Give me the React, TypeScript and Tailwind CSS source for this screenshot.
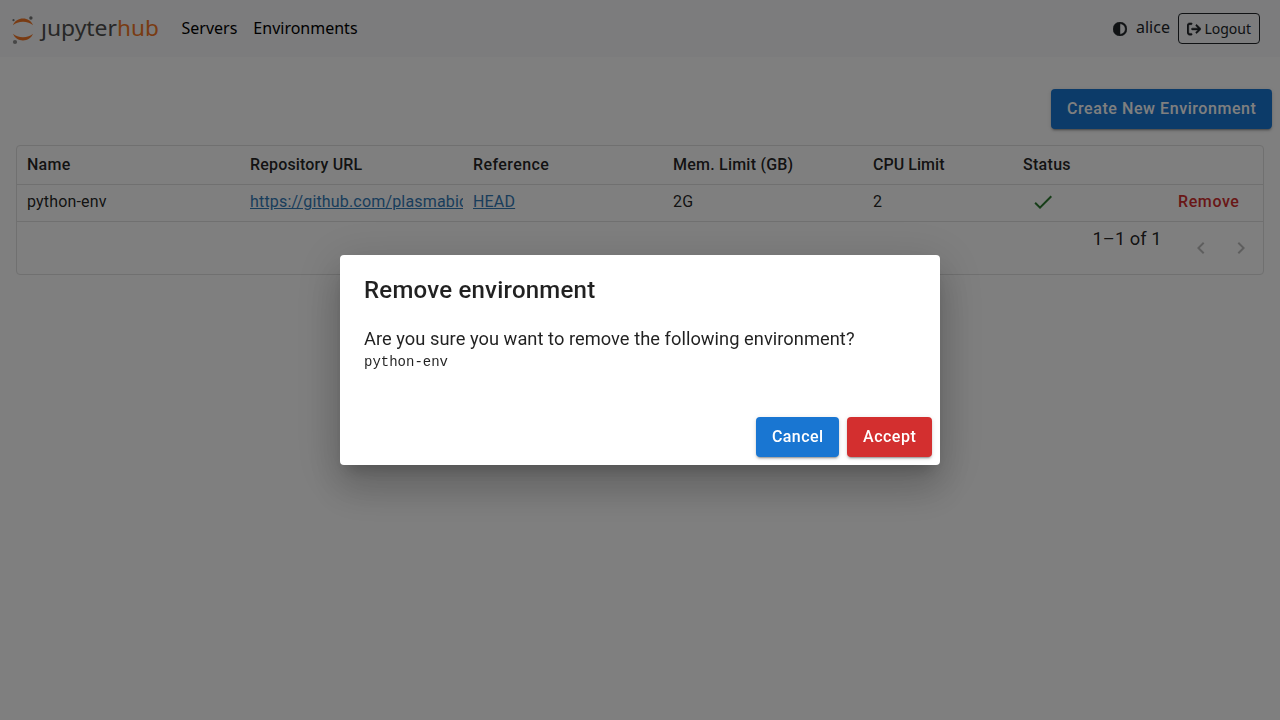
import React from "react";
import { FaArrowRightFromBracket, FaCircleHalfStroke } from "react-icons/fa6";
import { MdCheck, MdKeyboardArrowLeft, MdKeyboardArrowRight } from "react-icons/md";

const buttonShadow =
  "shadow-[0px_3px_1px_-2px_rgba(0,0,0,0.2),0px_2px_2px_0px_rgba(0,0,0,0.14),0px_1px_5px_0px_rgba(0,0,0,0.12)]";
const buttonBase =
  "h-10 rounded-[4px] px-4 py-1.5 text-base leading-7 font-medium text-white";

function Logo() {
  return (
    <svg width="148" height="36" viewBox="0 0 148 36" role="img" aria-label="JupyterHub">
      <path d="M1 14.300C2.800 9.800 6.600 7.600 11 7.600s8.200 2.200 10 6.700C18.600 12 15 10.800 11 10.800S3.400 12 1 14.300z" fill="#f37726" />
      <path d="M1 22.800C2.800 27.300 6.600 29.500 11 29.500s8.200-2.200 10-6.700C18.600 25.100 15 26.300 11 26.300S3.400 25.100 1 22.800z" fill="#f37726" />
      <circle cx="18.900" cy="7" r="1.700" fill="#767677" />
      <circle cx="1.500" cy="9.200" r="1.100" fill="#767677" />
      <circle cx="3" cy="31" r="2.100" fill="#8e8e8e" />
      <text x="29" y="24.800" fontSize="22.300" fill="#4e4e4e" textLength="76" lengthAdjust="spacingAndGlyphs">ȷupyter</text>
      <text x="105" y="24.800" fontSize="22.300" fill="#f37726" textLength="41.800" lengthAdjust="spacingAndGlyphs">hub</text>
    </svg>
  );
}

function Navbar() {
  return (
    <nav className="flex h-[57px] items-center bg-[#f8f9fa] pr-5 pl-3 font-['Noto_Sans',sans-serif] text-base text-black">
      <Logo />
      <div className="ml-[21.500px] flex gap-4 pb-px">
        <a>Servers</a>
        <a>Environments</a>
      </div>
      <div className="ml-auto flex items-center text-[#212529]">
        <FaCircleHalfStroke size={14} className="mt-px" stroke="currentColor" strokeWidth={16} />
        <span className="mr-[8.500px] ml-[8.500px] pb-[3px]">alice</span>
        <a className="flex h-[31px] items-center gap-[3px] rounded-[4px] border border-[#212529] px-2 text-sm">
          <FaArrowRightFromBracket size={14} stroke="currentColor" strokeWidth={18} />
          Logout
        </a>
      </div>
    </nav>
  );
}

const columns = "grid grid-cols-[223px_223px_200px_200px_150px_150px_100px]";
const headers = [
  { label: "Name", tracking: "tracking-[0.25px]" },
  { label: "Repository URL", tracking: "tracking-[0.17px]" },
  { label: "Reference", tracking: "tracking-[0.4px]" },
  { label: "Mem. Limit (GB)", tracking: "tracking-[0.22px]" },
  { label: "CPU Limit", tracking: "tracking-[0.05px]" },
  { label: "Status", tracking: "tracking-[0.3px]" },
];

function EnvironmentTable() {
  return (
    <div className="mx-4 mt-4 h-[130px] overflow-hidden rounded-[4px] border border-[#e0e0e0] text-base tracking-[0.01071em]">
      <div className={`${columns} h-[39px] items-center border-b border-[#e0e0e0] font-medium`}>
        {headers.map((h) => (
          <div key={h.label} className={`px-2.5 ${h.tracking}`}>{h.label}</div>
        ))}
      </div>
      <div className={`${columns} h-[37px] items-center border-b border-[#e0e0e0]`}>
        <div className="px-2.5 pb-0.5">python-env</div>
        <div className="pb-0.5 pl-2.5">
          <div className="overflow-hidden whitespace-nowrap text-[#337ab7] underline">
            https://github.com/plasmabio
          </div>
        </div>
        <div className="px-2.5 pb-0.5 text-[#337ab7] underline">HEAD</div>
        <div className="px-2.5 pb-0.5">2G</div>
        <div className="px-2.5 pb-0.5">2</div>
        <div className="pb-0.5 pl-[18px]"><MdCheck size={24} color="#2e7d32" /></div>
        <button className="pb-0.5 pl-[15px] text-left font-medium tracking-[0.6px] text-[#d32f2f]">Remove</button>
      </div>
      <div className="flex h-[52px] items-center justify-end pr-0.5">
        <span className="mr-[19.500px] pb-[18px] text-[18.286px] leading-6 tracking-[0.04px]">1–1 of 1</span>
        <div className="flex text-black/26">
          <span className="p-2"><MdKeyboardArrowLeft size={24} /></span>
          <span className="p-2"><MdKeyboardArrowRight size={24} /></span>
        </div>
      </div>
    </div>
  );
}

function RemoveDialog() {
  return (
    <div className="fixed inset-0 flex items-center justify-center bg-black/50">
      <div
        role="dialog"
        className="flex h-[210px] w-[600px] flex-col rounded-[4px] bg-white shadow-[0px_11px_15px_-7px_rgba(0,0,0,0.2),0px_24px_38px_3px_rgba(0,0,0,0.14),0px_9px_46px_8px_rgba(0,0,0,0.12)]"
      >
        <h2 className="px-6 pt-4 text-[24px] leading-[38px] font-medium tracking-[0.22px]">Remove environment</h2>
        <div className="px-6 pt-4 text-[18.286px] leading-[27.400px] tracking-[0.04px]">
          <p>Are you sure you want to remove the following environment?</p>
          <pre className="font-['Liberation_Mono',monospace] text-sm leading-5 tracking-normal">python-env</pre>
        </div>
        <div className="mt-auto flex justify-end gap-2 p-2">
          <button className={`${buttonBase} ${buttonShadow} w-[83px] bg-[#1976d2] tracking-[0.4px]`}>Cancel</button>
          <button className={`${buttonBase} ${buttonShadow} w-[85px] bg-[#d32f2f] tracking-[0.52px]`}>Accept</button>
        </div>
      </div>
    </div>
  );
}

export default function App() {
  return (
    <div className="h-screen overflow-hidden bg-white font-[Roboto,sans-serif] text-black/87">
      <Navbar />
      <div className="flex justify-end pt-8 pr-2">
        <button className={`${buttonBase} ${buttonShadow} w-[221px] whitespace-nowrap bg-[#1976d2] tracking-[0.57px]`}>Create New Environment</button>
      </div>
      <EnvironmentTable />
      <RemoveDialog />
    </div>
  );
}
